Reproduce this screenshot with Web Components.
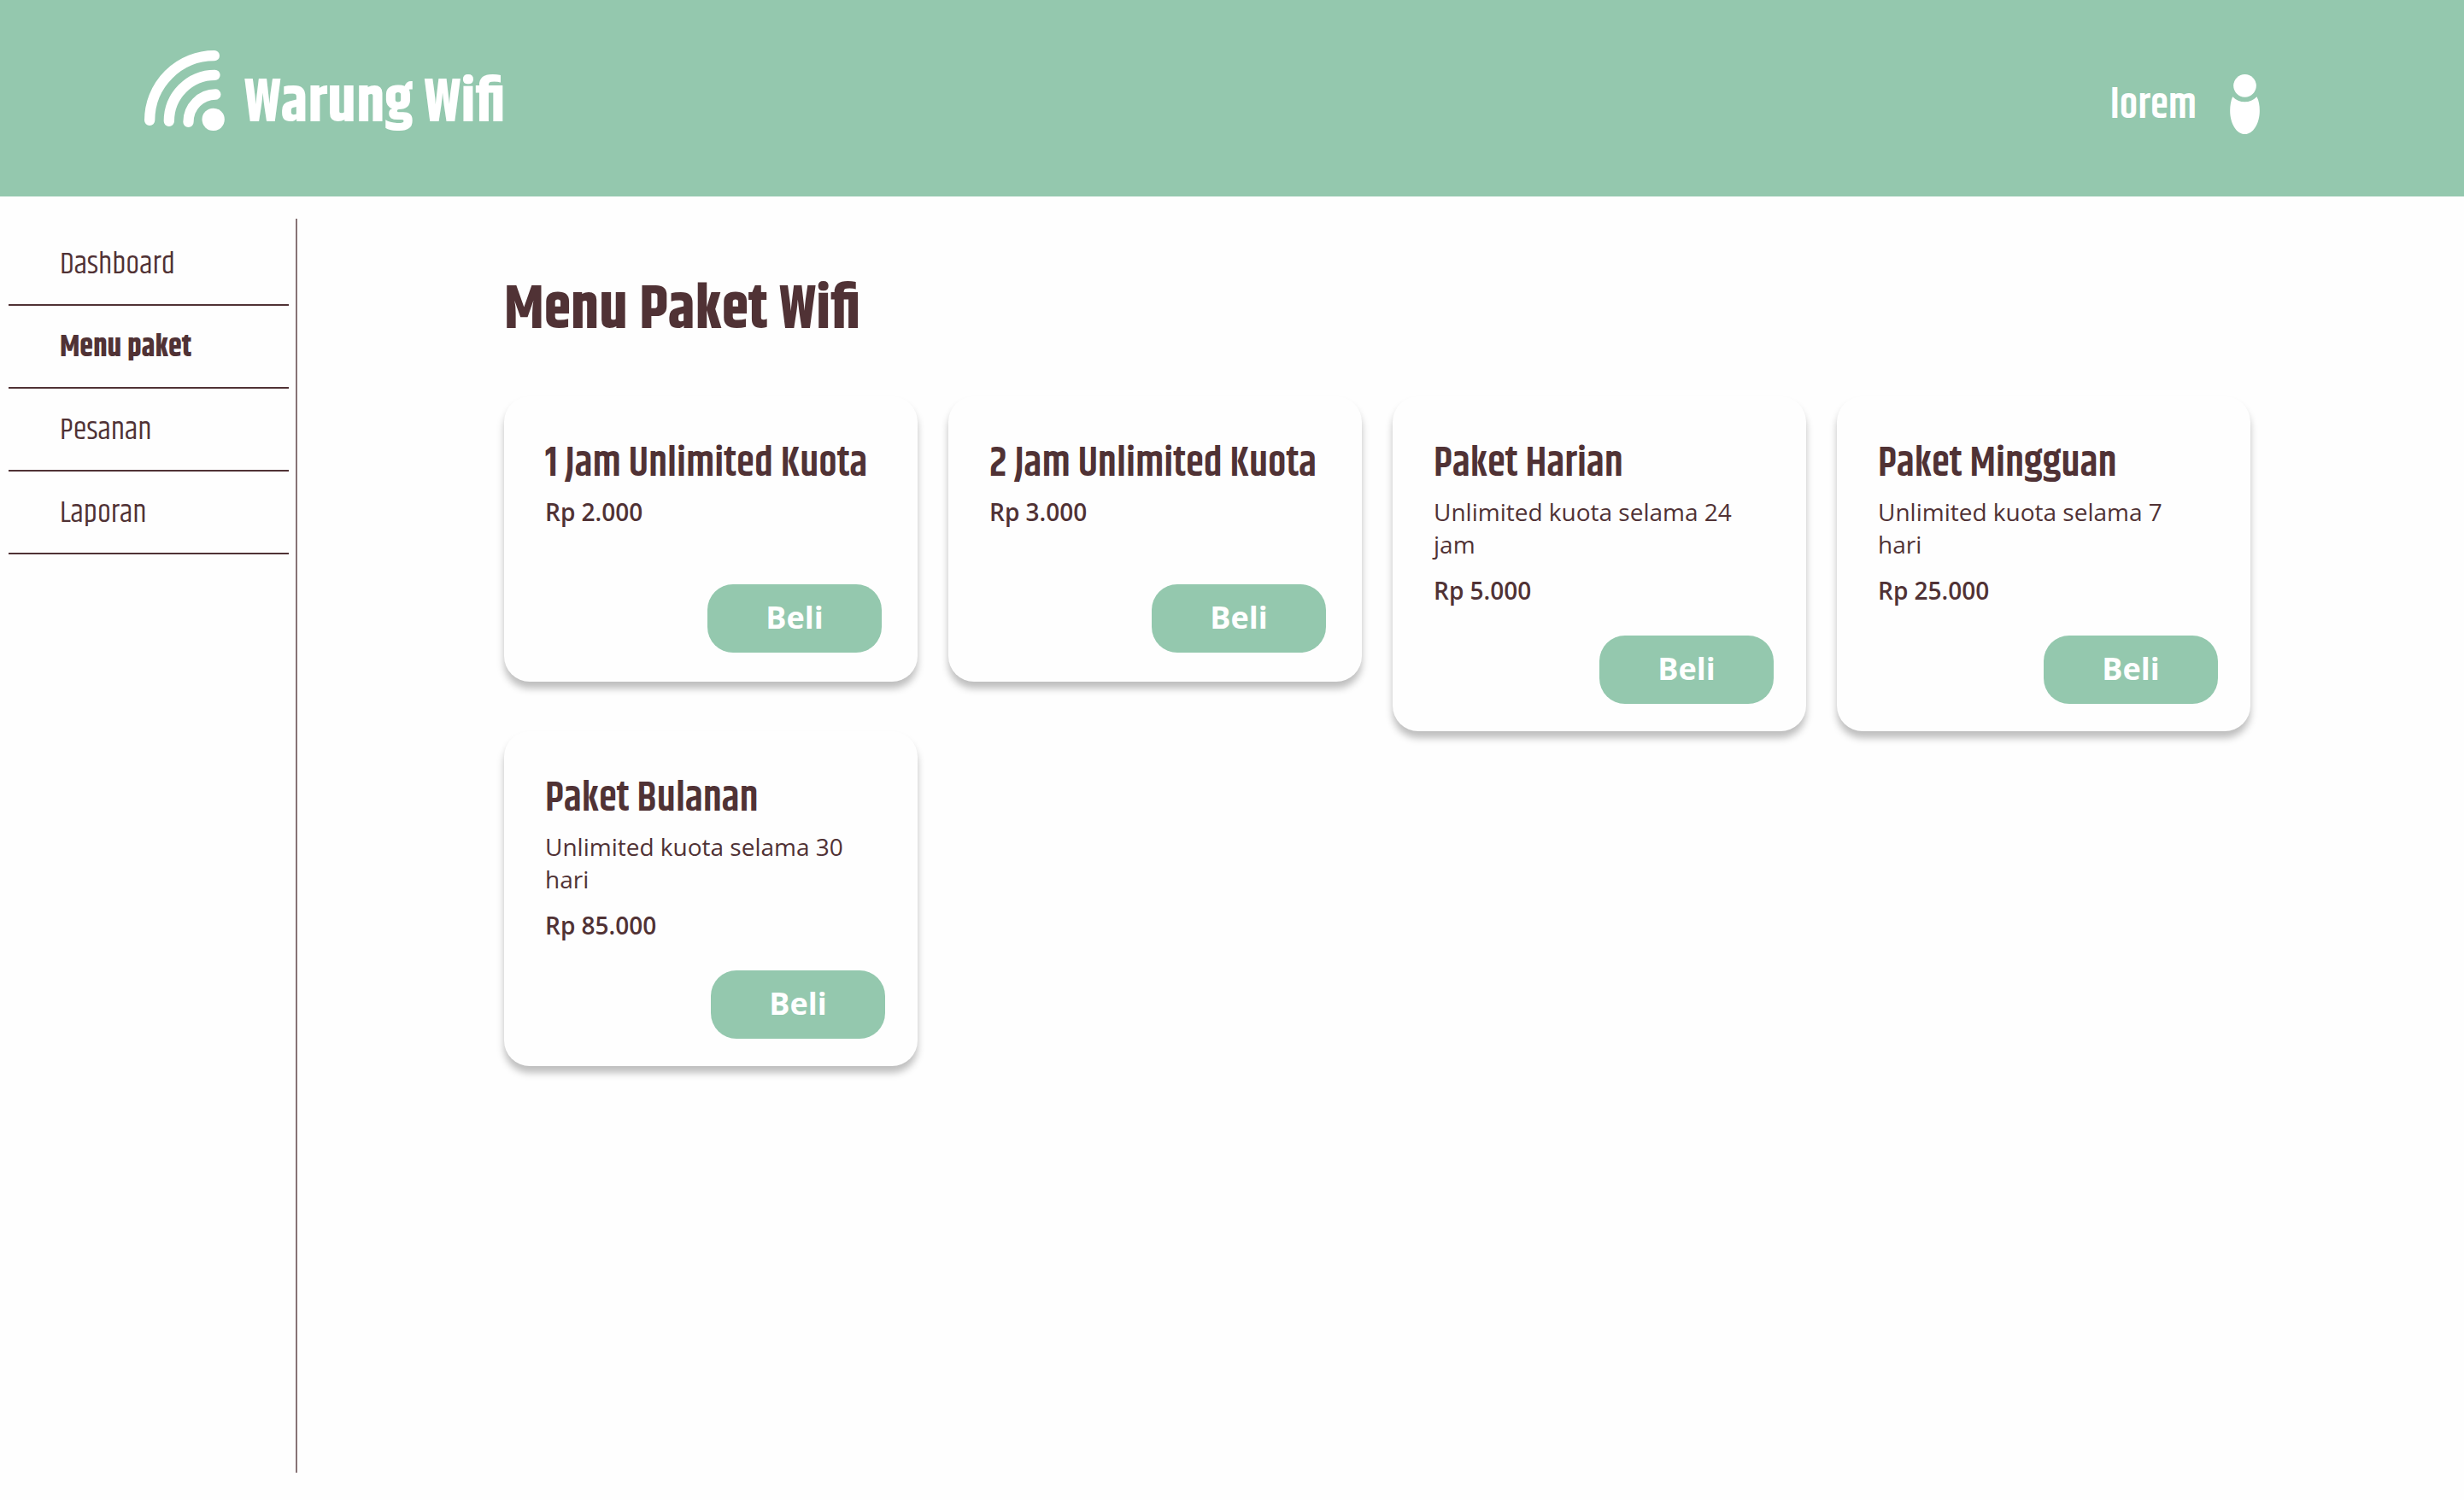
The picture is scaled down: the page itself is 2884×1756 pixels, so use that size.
<!DOCTYPE html>
<html lang="id">
<head>
<meta charset="utf-8">
<meta name="viewport" content="width=device-width, initial-scale=1">
<title>Warung Wifi</title>
<style>
  :root {
    --green: #94c8ae;
    --ink: #503235;
    --rule: #877376;
    --paper: #fefefe;
    --display: Khand, "Liberation Sans Narrow", "Liberation Sans", sans-serif;
    --body: "Open Sans", "Noto Sans", sans-serif;
  }
  body { margin: 0; background: var(--paper); color: var(--ink); font-family: var(--body); }
</style>
</head>
<body>
<wifi-app></wifi-app>

<template id="t-app">
  <style>
    :host { display: flex; flex-direction: column; min-height: 100vh; }
    .body { flex: 1; display: flex; padding: 26px 0 32px; }
    main { flex: 1; padding: 67px 250px 0 242px; }
    h1 { margin: 0; font: bold 72px/80px var(--display); }
    .grid { display: grid; grid-template-columns: repeat(4, 1fr); gap: 0 36px; align-items: start; margin-top: 61px; }
  </style>
  <wifi-header user="lorem">Warung Wifi</wifi-header>
  <div class="body">
    <wifi-nav>
      <wifi-nav-item href="#dashboard">Dashboard</wifi-nav-item>
      <wifi-nav-item href="#menu" active>Menu paket</wifi-nav-item>
      <wifi-nav-item href="#pesanan">Pesanan</wifi-nav-item>
      <wifi-nav-item href="#laporan">Laporan</wifi-nav-item>
    </wifi-nav>
    <main>
      <h1>Menu Paket Wifi</h1>
      <div class="grid">
        <paket-card price="Rp 2.000" compact>1 Jam Unlimited Kuota</paket-card>
        <paket-card price="Rp 3.000" compact>2 Jam Unlimited Kuota</paket-card>
        <paket-card price="Rp 5.000" desc="Unlimited kuota selama 24 jam">Paket Harian</paket-card>
        <paket-card price="Rp 25.000" desc="Unlimited kuota selama 7 hari">Paket Mingguan</paket-card>
        <paket-card price="Rp 85.000" desc="Unlimited kuota selama 30 hari">Paket Bulanan</paket-card>
      </div>
    </main>
  </div>
</template>

<template id="t-header">
  <style>
    :host { display: block; background: var(--green); color: #fff; font-family: var(--display); }
    header { box-sizing: border-box; min-height: 230px; padding: 0 239px 0 169px; display: flex; align-items: center; justify-content: space-between; }
    a { color: inherit; text-decoration: none; display: flex; align-items: center; }
    svg { display: block; }
    .brand { gap: 23px; font-size: 72px; font-weight: 700; padding-bottom: 18px; }
    .brand span { padding-top: 30px; line-height: 64px; }
    .user { gap: 39px; font-size: 48px; font-weight: 600; padding-top: 14px; }
    .user span { padding-top: 6px; line-height: 64px; }
  </style>
  <header>
    <a class="brand" href="#home">
      <svg width="94" height="94" viewBox="0 0 282 282" fill="none" stroke="#fff" stroke-width="37" stroke-linecap="round" aria-hidden="true">
        <path d="M245.5 18.5A227 227 0 0 0 18.5 245.5"/>
        <path d="M247.500 86.500A161 162 0 0 0 86.500 248.500"/>
        <path d="M250 154.500A95.500 97 0 0 0 154.500 251.500"/>
        <circle cx="242" cy="242.500" r="39.500" fill="#fff" stroke="none"/>
      </svg>
      <span><slot></slot></span>
    </a>
    <a class="user" href="#akun">
      <span id="name"></span>
      <svg width="35" height="70" viewBox="511 80 104 210" fill="#fff" aria-hidden="true">
        <circle cx="563" cy="120" r="40"/>
        <path d="M520 159A59.500 59.500 0 0 0 605 159C612 172 615 190 615 208C615 253 592 290 563 290C534 290 511 253 511 208C511 190 514 172 520 159Z"/>
      </svg>
    </a>
  </header>
</template>

<template id="t-nav">
  <style>
    :host { display: block; box-sizing: border-box; flex: 0 0 348px; padding: 5px 8px 0 10px; border-right: 2px solid var(--rule); }
    nav { display: flex; flex-direction: column; }
  </style>
  <nav aria-label="Menu"><slot></slot></nav>
</template>

<template id="t-nav-item">
  <style>
    :host { display: block; border-bottom: 2px solid var(--ink); }
    a { display: block; padding: 29px 0 26px 60px; font: 400 36px/40px var(--display); color: var(--ink); text-decoration: none; }
    :host([active]) a { font-weight: 700; }
  </style>
  <a><slot></slot></a>
</template>

<template id="t-card">
  <style>
    :host { display: block; border-radius: 30px; background: var(--paper); box-shadow: 0 8px 8px rgba(0, 0, 0, .25); }
    article { box-sizing: border-box; min-height: 392px; padding: 52px 38px 32px 48px; display: flex; flex-direction: column; }
    :host([compact]) article { min-height: 334px; padding: 52px 42px 34px 48px; }
    h2 { margin: 0; font: 600 48px/56px var(--display); }
    p { margin: 8px 0; padding-right: 16px; font-size: 28px; line-height: 38px; }
    .price { margin: 8px 0 0; font-weight: 600; }
    button { margin-top: auto; align-self: flex-end; width: 204px; height: 80px; padding: 0 0 2px; border: 0; border-radius: 30px; background: var(--green); color: #fff; font: bold 36px/48px var(--body); cursor: pointer; }
  </style>
  <article>
    <h2><slot></slot></h2>
    <p class="desc"></p>
    <p class="price"></p>
    <button type="button">Beli</button>
  </article>
</template>

<script>
  class Base extends HTMLElement {
    constructor() {
      super();
      this.attachShadow({ mode: 'open' })
        .append(document.getElementById(this.constructor.template).content.cloneNode(true));
    }
    part$(selector) { return this.shadowRoot.querySelector(selector); }
  }
  customElements.define('wifi-header', class extends Base {
    static template = 't-header';
    connectedCallback() { this.part$('#name').textContent = this.getAttribute('user'); }
  });
  customElements.define('wifi-nav', class extends Base { static template = 't-nav'; });
  customElements.define('wifi-nav-item', class extends Base {
    static template = 't-nav-item';
    connectedCallback() {
      const link = this.part$('a');
      link.href = this.getAttribute('href');
      if (this.hasAttribute('active')) link.setAttribute('aria-current', 'page');
    }
  });
  customElements.define('paket-card', class extends Base {
    static template = 't-card';
    connectedCallback() {
      const desc = this.part$('.desc');
      if (this.hasAttribute('desc')) desc.textContent = this.getAttribute('desc');
      else if (desc) desc.remove();
      this.part$('.price').textContent = this.getAttribute('price');
    }
  });
  customElements.define('wifi-app', class extends Base { static template = 't-app'; });
</script>
</body>
</html>
